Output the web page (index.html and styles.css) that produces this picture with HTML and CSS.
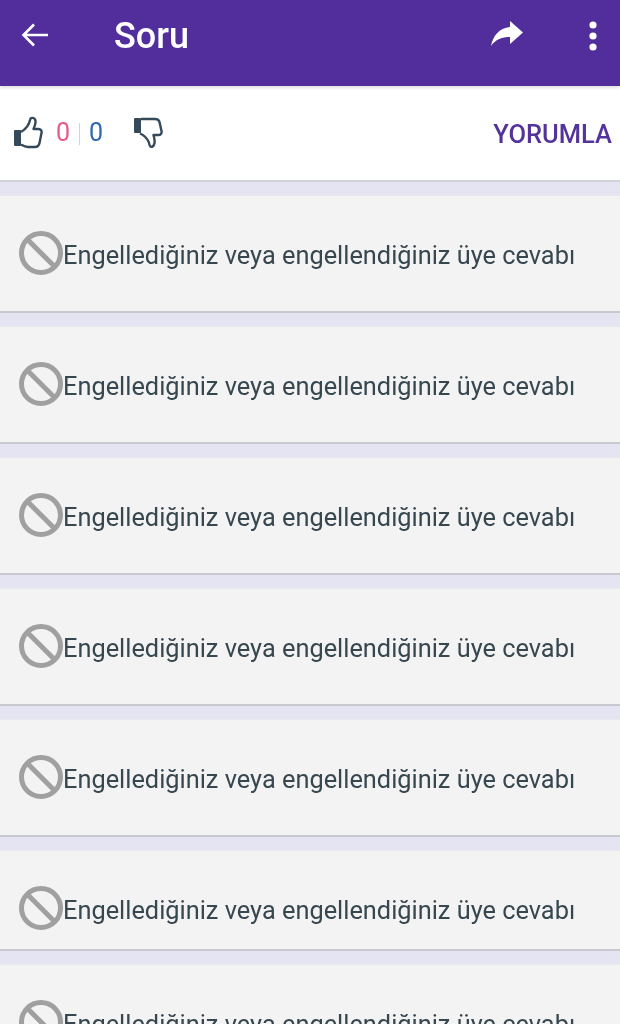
FILE: index.html
```html
<!DOCTYPE html>
<html lang="tr">
<head>
<meta charset="utf-8">
<title>Soru</title>
<link rel="stylesheet" href="styles.css">
</head>
<body>
<header class="appbar">
  <svg class="back" viewBox="0 0 30 30" width="30" height="30"><path d="M28 15H4M14 4.500 3.500 15 14 25.500" fill="none" stroke="#fff" stroke-width="2.600"/></svg>
  <h1 class="title">Soru</h1>
  <svg class="share" viewBox="0 0 34 28" width="34" height="28"><path d="M20 1 33 12.500 20 24V17C12 17 6 19 1 26 3 16 9 8 20 7Z" fill="#fff"/></svg>
  <svg class="more" viewBox="0 0 10 30" width="10" height="30"><circle cx="5" cy="4" r="3.600" fill="#fff"/><circle cx="5" cy="15" r="3.600" fill="#fff"/><circle cx="5" cy="26" r="3.600" fill="#fff"/></svg>
</header>
<section class="actions">
  <svg class="thumb" viewBox="0 0 30 34" width="30" height="34"><rect x="1" y="15" width="7" height="16" rx="1" fill="#34495a"/><path d="M8 17c5-3 8-7 9-12 .5-3 5-3 5.500 1 .3 3-1 6-2 8h5c2.500 0 3.500 2 3 4l-2 10c-.5 2.500-2 4-4.500 4H15c-3 0-4.500-1-7-2.500" fill="none" stroke="#34495a" stroke-width="2.400" stroke-linejoin="round"/></svg>
  <span class="count pink">0</span>
  <span class="sep"></span>
  <span class="count blue">0</span>
  <svg class="thumb-down" viewBox="0 0 30 34" width="30" height="34"><rect x="1" y="3" width="7" height="15" rx="1" fill="#34495a"/><path d="M8 4h14c2.500 0 4 1 4.500 3l2 9c.5 2.500-1 4-3 4h-5c.8 3 1.500 5.500 1 8-.5 3-2.500 4.500-4 3.500-1.500-1-1-3-2-5-1.500-3-4-6-8.500-8" fill="none" stroke="#34495a" stroke-width="2.400" stroke-linejoin="round"/></svg>
  <span class="comment">YORUMLA</span>
</section>
<main class="list">
  <article class="card"><svg class="ban" viewBox="0 0 44 44" width="44" height="44"><circle cx="22" cy="22" r="19.500" fill="none" stroke="#a0a0a0" stroke-width="5"/><path d="M8 8 36 36" stroke="#a0a0a0" stroke-width="5"/></svg><p class="msg">Engellediğiniz veya engellendiğiniz üye cevabı</p></article>
  <article class="card"><svg class="ban" viewBox="0 0 44 44" width="44" height="44"><circle cx="22" cy="22" r="19.500" fill="none" stroke="#a0a0a0" stroke-width="5"/><path d="M8 8 36 36" stroke="#a0a0a0" stroke-width="5"/></svg><p class="msg">Engellediğiniz veya engellendiğiniz üye cevabı</p></article>
  <article class="card"><svg class="ban" viewBox="0 0 44 44" width="44" height="44"><circle cx="22" cy="22" r="19.500" fill="none" stroke="#a0a0a0" stroke-width="5"/><path d="M8 8 36 36" stroke="#a0a0a0" stroke-width="5"/></svg><p class="msg">Engellediğiniz veya engellendiğiniz üye cevabı</p></article>
  <article class="card"><svg class="ban" viewBox="0 0 44 44" width="44" height="44"><circle cx="22" cy="22" r="19.500" fill="none" stroke="#a0a0a0" stroke-width="5"/><path d="M8 8 36 36" stroke="#a0a0a0" stroke-width="5"/></svg><p class="msg">Engellediğiniz veya engellendiğiniz üye cevabı</p></article>
  <article class="card"><svg class="ban" viewBox="0 0 44 44" width="44" height="44"><circle cx="22" cy="22" r="19.500" fill="none" stroke="#a0a0a0" stroke-width="5"/><path d="M8 8 36 36" stroke="#a0a0a0" stroke-width="5"/></svg><p class="msg">Engellediğiniz veya engellendiğiniz üye cevabı</p></article>
  <article class="card card-short"><svg class="ban" viewBox="0 0 44 44" width="44" height="44"><circle cx="22" cy="22" r="19.500" fill="none" stroke="#a0a0a0" stroke-width="5"/><path d="M8 8 36 36" stroke="#a0a0a0" stroke-width="5"/></svg><p class="msg">Engellediğiniz veya engellendiğiniz üye cevabı</p></article>
  <article class="card"><svg class="ban" viewBox="0 0 44 44" width="44" height="44"><circle cx="22" cy="22" r="19.500" fill="none" stroke="#a0a0a0" stroke-width="5"/><path d="M8 8 36 36" stroke="#a0a0a0" stroke-width="5"/></svg><p class="msg">Engellediğiniz veya engellendiğiniz üye cevabı</p></article>
</main>
</body>
</html>
```
FILE: styles.css
```css
html, body {
  margin: 0;
  padding: 0;
  height: 1024px;
  overflow: hidden;
  background: #e4e4f2;
  font-family: Roboto, "Liberation Sans", sans-serif;
}
body { filter: blur(0.5px); }
.appbar {
  position: relative;
  height: 86px;
  box-sizing: border-box;
  background: #512e9c;
  box-shadow: 0 2px 3px rgba(0, 0, 0, 0.12);
  display: flex;
  align-items: flex-start;
  padding: 20px 22px 0 20px;
  color: #fff;
}
.title {
  margin: -3px 0 0 64px;
  font-size: 36px;
  line-height: 38px;
  font-weight: 500;
  flex: 1;
}
.share { margin: 0 64px 0 0; }
.more { margin: 1px 0 0; }
.actions {
  height: 96px;
  box-sizing: border-box;
  background: #fff;
  border-bottom: 2px solid #d2d2da;
  display: flex;
  align-items: center;
  padding: 0 8px 0 13px;
}
.thumb { margin-top: -2px; }
.count { font-size: 25px; line-height: 28px; }
.pink { color: #e8588a; margin-left: 13px; }
.blue { color: #2f67b5; }
.sep { width: 1px; height: 22px; background: #d4d4d4; margin: 2px 9px 0 9px; }
.thumb-down { margin: -2px 0 0 30px; }
.comment {
  margin-left: auto;
  font-size: 25.500px;
  font-weight: 500;
  color: #54339c;
  margin-top: 2px;
}
.list {
  display: flex;
  flex-direction: column;
  gap: 13px;
  padding-top: 13px;
}
.card {
  flex: none;
  height: 118px;
  box-sizing: border-box;
  background: #f3f3f4;
  border-top: 1px solid #e8e8ee;
  border-bottom: 2px solid #c8c8cf;
  display: flex;
  align-items: flex-start;
  padding: 35px 0 0 19px;
  overflow: hidden;
}
.card-short { height: 101px; }
.ban { flex: none; }
.msg {
  margin: 10px 0 0 0;
  font-size: 25.350px;
  line-height: 28px;
  color: #37474f;
  white-space: nowrap;
}
```
